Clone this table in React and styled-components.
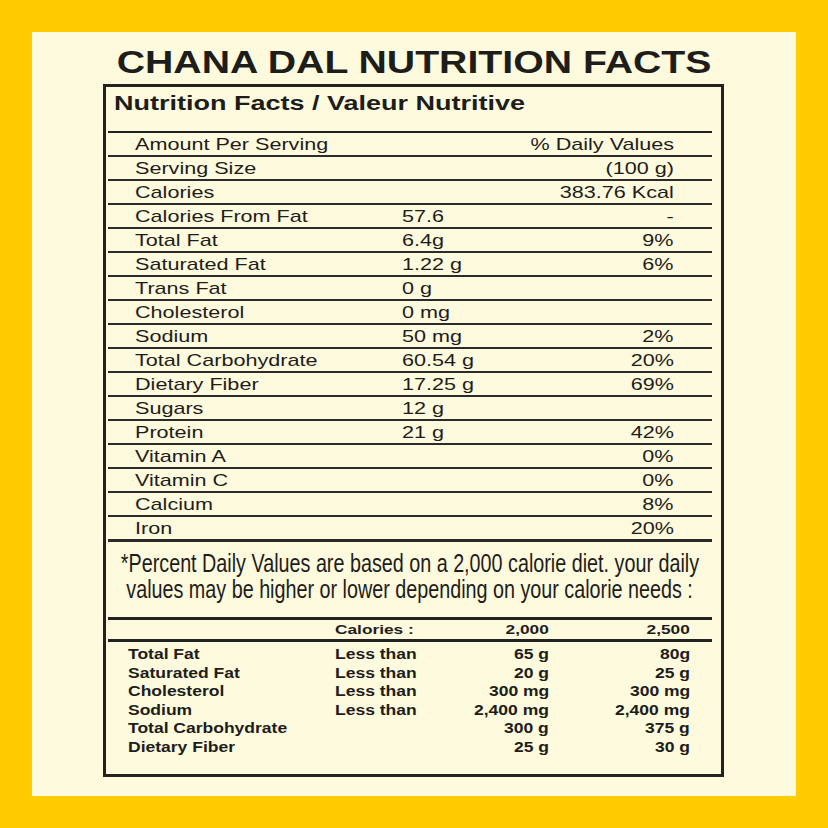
import React from 'react'
import styled, { createGlobalStyle } from 'styled-components'

const facts = [
  ['Amount Per Serving', '', '% Daily Values'],
  ['Serving Size', '', '(100 g)'],
  ['Calories', '', '383.76 Kcal'],
  ['Calories From Fat', '57.6', '-'],
  ['Total Fat', '6.4g', '9%'],
  ['Saturated Fat', '1.22 g', '6%'],
  ['Trans Fat', '0 g', ''],
  ['Cholesterol', '0 mg', ''],
  ['Sodium', '50 mg', '2%'],
  ['Total Carbohydrate', '60.54 g', '20%'],
  ['Dietary Fiber', '17.25 g', '69%'],
  ['Sugars', '12 g', ''],
  ['Protein', '21 g', '42%'],
  ['Vitamin A', '', '0%'],
  ['Vitamin C', '', '0%'],
  ['Calcium', '', '8%'],
  ['Iron', '', '20%'],
]

const limits = [
  ['Total Fat', 'Less than', '65 g', '80g'],
  ['Saturated Fat', 'Less than', '20 g', '25 g'],
  ['Cholesterol', 'Less than', '300 mg', '300 mg'],
  ['Sodium', 'Less than', '2,400 mg', '2,400 mg'],
  ['Total Carbohydrate', '', '300 g', '375 g'],
  ['Dietary Fiber', '', '25 g', '30 g'],
]

export default function App() {
  return (
    <Page>
      <GlobalStyle />
      <Panel>
        <Title>
          <Stretch $x={1.265} $origin="center">CHANA DAL NUTRITION FACTS</Stretch>
        </Title>
        <Label>
          <Heading>
            <Stretch $x={1.35}>Nutrition Facts / Valeur Nutritive</Stretch>
          </Heading>
          <FactsTable>
            {facts.map(([name, amount, dv], i) => (
              <FactRow key={name} $last={i === facts.length - 1}>
                <span><Stretch>{name}</Stretch></span>
                <span><Stretch>{amount}</Stretch></span>
                <RightCell><Stretch $origin="right">{dv}</Stretch></RightCell>
              </FactRow>
            ))}
          </FactsTable>
          <Footnote>
            <Stretch $x={0.79} $origin="center">
              *Percent Daily Values are based on a 2,000 calorie diet. your daily
            </Stretch>
            <Stretch $x={0.79} $origin="center">
              values may be higher or lower depending on your calorie needs :
            </Stretch>
          </Footnote>
          <DailyTable>
            <DailyHead>
              <span />
              <span><Stretch $x={1.28}>Calories :</Stretch></span>
              <RightCell><Stretch $x={1.28} $origin="right">2,000</Stretch></RightCell>
              <RightCell><Stretch $x={1.28} $origin="right">2,500</Stretch></RightCell>
            </DailyHead>
            <DailyBody>
              {limits.map(([name, rule, a, b]) => (
                <DailyRow key={name}>
                  <span><Stretch $x={1.25}>{name}</Stretch></span>
                  <span><Stretch $x={1.25}>{rule}</Stretch></span>
                  <RightCell><Stretch $x={1.25} $origin="right">{a}</Stretch></RightCell>
                  <RightCell><Stretch $x={1.25} $origin="right">{b}</Stretch></RightCell>
                </DailyRow>
              ))}
            </DailyBody>
          </DailyTable>
        </Label>
      </Panel>
    </Page>
  )
}

const GlobalStyle = createGlobalStyle`
  html, body {
    margin: 0;
    padding: 0;
    background: #ffcc00;
  }
  * {
    box-sizing: border-box;
  }
`

const Page = styled.div`
  width: 828px;
  height: 828px;
  padding: 32px;
  background: #ffcc00;
`

const Panel = styled.div`
  height: 100%;
  padding-top: 16px;
  background: #fefadd;
  font-family: "Liberation Sans", Arial, sans-serif;
  color: #1d1d1b;
`

const Title = styled.h1`
  margin: 0 0 6px;
  text-align: center;
  font-size: 31px;
  line-height: 30px;
  font-weight: 700;
`

const Stretch = styled.span`
  display: inline-block;
  white-space: nowrap;
  transform: scaleX(${p => p.$x || 1.27});
  transform-origin: ${p => p.$origin || 'left'} center;
`

const Label = styled.div`
  margin-left: 71px;
  width: 621px;
  height: 693px;
  padding: 6px 9px 0 2px;
  border: 3px solid #222;
`

const Heading = styled.h2`
  margin: 0 0 18px;
  padding-left: 6px;
  font-size: 20px;
  line-height: 20px;
  font-weight: 700;
`

const FactsTable = styled.div`
  border-top: 2px solid #222;
`

const FactRow = styled.div`
  display: grid;
  grid-template-columns: 267px 1fr auto;
  height: ${p => (p.$last ? 25 : 24)}px;
  padding: 0 38px 0 27px;
  border-bottom: ${p => (p.$last ? 3 : 2)}px solid #2b2b2b;
  font-size: 17px;
  line-height: 24px;
`

const RightCell = styled.span`
  text-align: right;
`

const Footnote = styled.div`
  display: flex;
  flex-direction: column;
  align-items: center;
  padding: 8px 0 15px 0;
  font-size: 25px;
  line-height: 26px;
`

const DailyTable = styled.div`
  border-top: 3px solid #222;
  font-weight: 700;
`

const DailyHead = styled.div`
  display: grid;
  grid-template-columns: 207px 107px 107px 141px;
  height: 22px;
  padding: 0 22px 0 20px;
  border-bottom: 3px solid #222;
  font-size: 13.5px;
  line-height: 19px;
`

const DailyBody = styled.div`
  padding-top: 3px;
`

const DailyRow = styled.div`
  display: grid;
  grid-template-columns: 207px 107px 107px 141px;
  height: 18.6px;
  padding: 0 22px 0 20px;
  font-size: 14px;
  line-height: 18.6px;
`
